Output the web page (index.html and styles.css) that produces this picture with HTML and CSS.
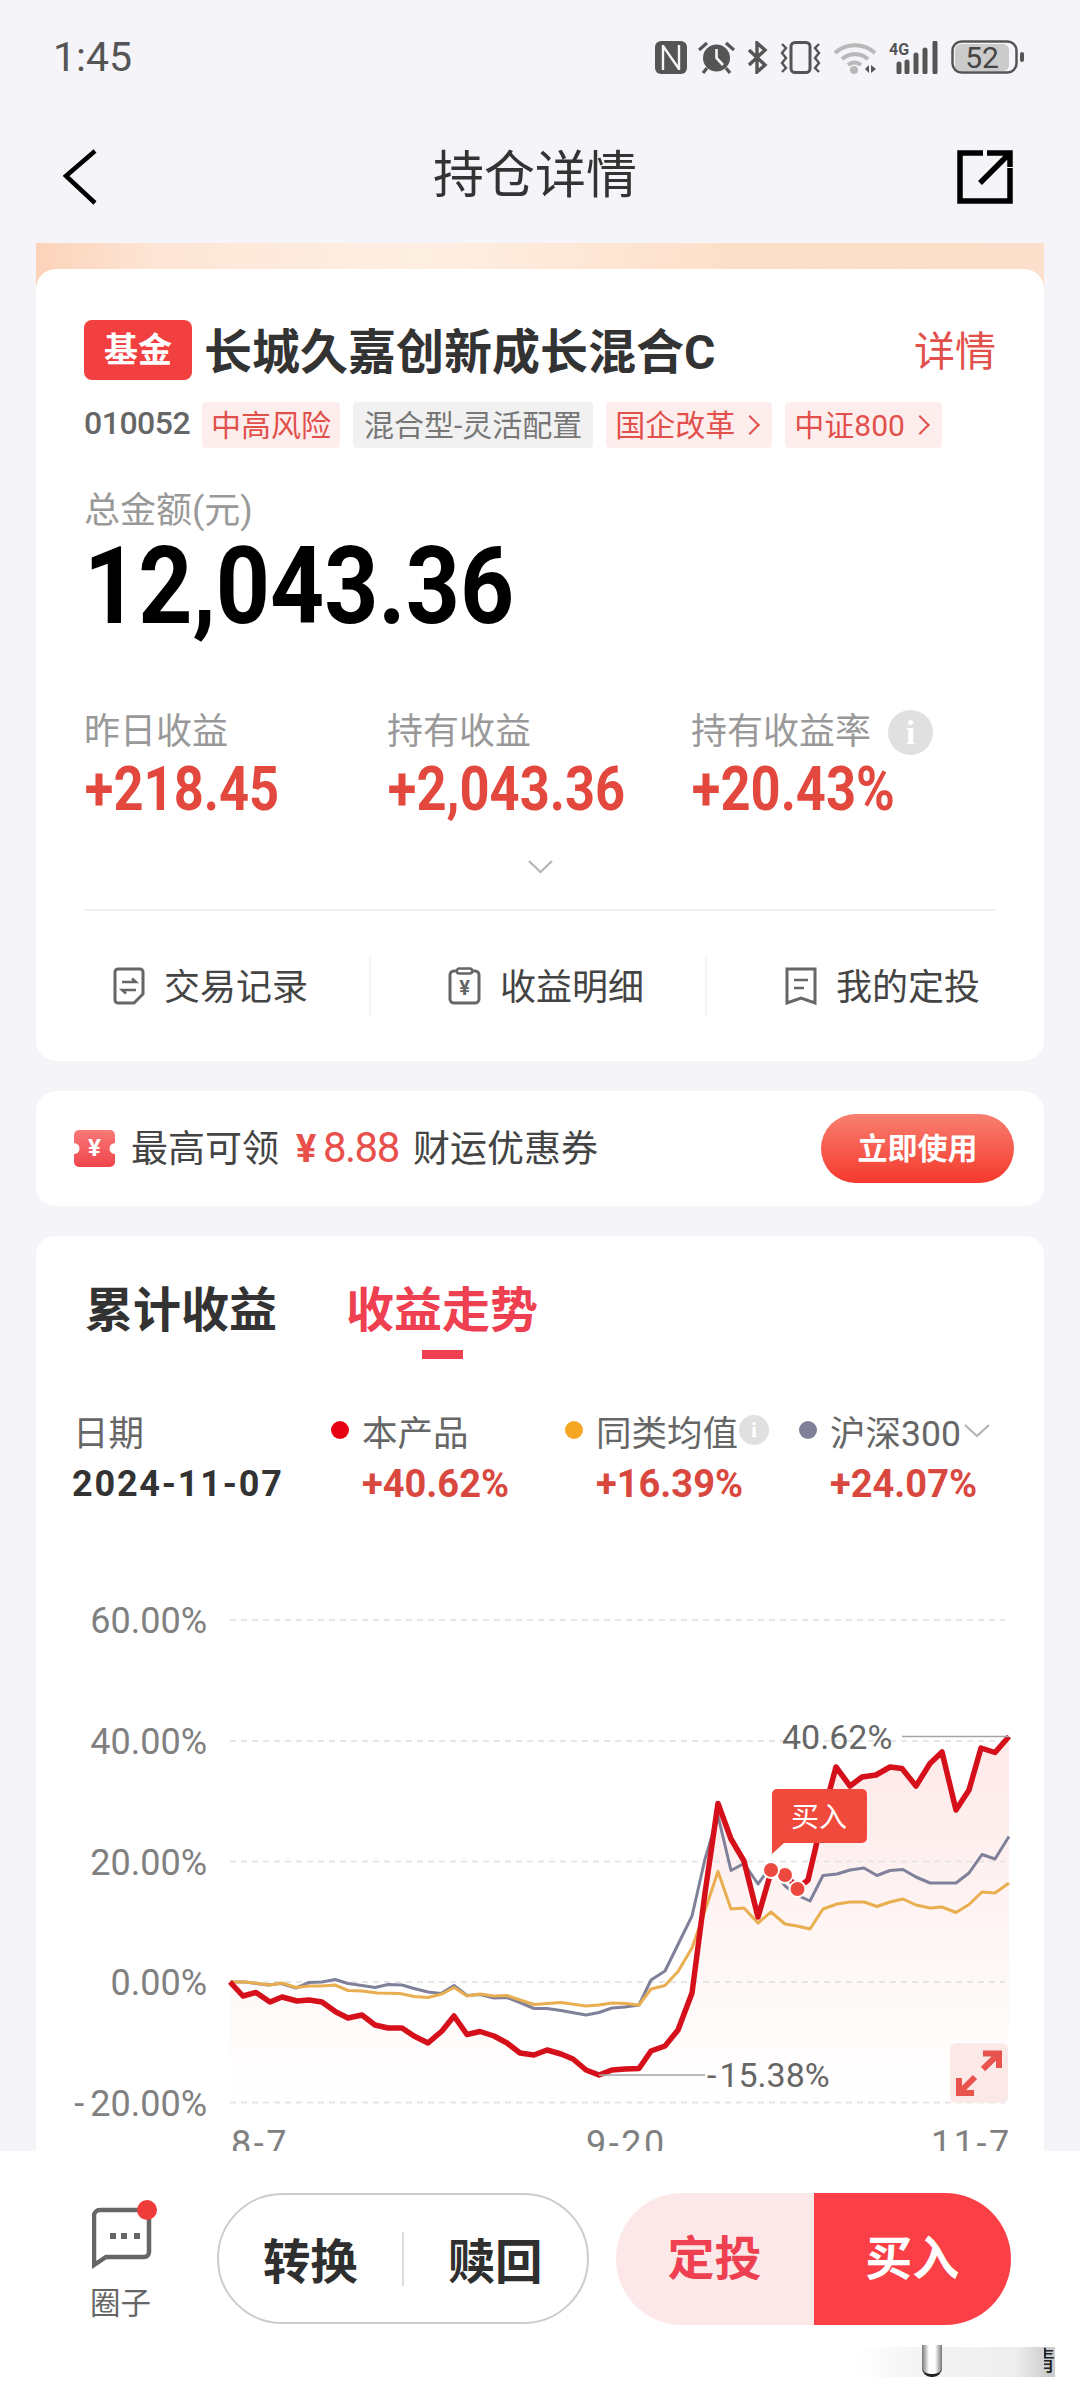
FILE: index.html
```html
<!DOCTYPE html>
<html lang="zh-CN">
<head>
    <meta charset="UTF-8">
    <meta name="viewport" content="width=device-width, initial-scale=1.0">
    <title>持仓详情</title>
    <link rel="stylesheet" href="styles.css">
</head>
<body>
    <div class="page">
        <div class="top">
            <div class="status-bar">
                <span class="clock">1:45</span>
                <div class="status-icons">
                    <svg class="nfc" width="32" height="33" viewBox="0 0 32 33"><rect width="32" height="33" rx="6" fill="#555"/><path d="M8 4V29M24 4V29M8 5L24 28" fill="none" stroke="#f4f4f9" stroke-width="2.4"/></svg>
                    <svg width="37" height="33" viewBox="0 0 37 33"><circle cx="18.500" cy="17" r="13.500" fill="#555"/><path d="M18.500 8V17L25 24" fill="none" stroke="#f4f4f9" stroke-width="2.6"/><path d="M1 9L9 2M36 9L28 2M9 27L5 32M28 27L32 32" fill="none" stroke="#555" stroke-width="3.200"/></svg>
                    <svg width="22" height="33" viewBox="0 0 22 33"><path d="M3 9L19 24L11 31V2L19 9L3 24" fill="none" stroke="#555" stroke-width="3.4"/></svg>
                    <svg width="43" height="33" viewBox="0 0 43 33"><rect x="12" y="1.500" width="19" height="30" rx="4" fill="none" stroke="#555" stroke-width="3"/><path d="M3 3L7 7L3 12L7 17L3 22L7 27L3 31M40 3L36 7L40 12L36 17L40 22L36 27L40 31" fill="none" stroke="#555" stroke-width="2.4"/></svg>
                    <svg width="45" height="33" viewBox="0 0 45 33"><path d="M2 12A30 30 0 0 1 42 12M9 18A20 20 0 0 1 35 18M15 24A10 10 0 0 1 28 24" fill="none" stroke="#b8b8b8" stroke-width="4"/><circle cx="21" cy="29" r="4" fill="#b8b8b8"/><path d="M32 28L36 24V32ZM38 24L43 28L38 32Z" fill="#555"/></svg>
                    <svg width="51" height="33" viewBox="0 0 51 33"><text class="sig-label" x="0" y="14">4G</text><path d="M10 23V31M18 21V31M27 14V31M36 9V31M46 2V31" fill="none" stroke="#555" stroke-width="5" stroke-linecap="round"/></svg>
                    <svg width="73" height="34" viewBox="0 0 73 34"><rect x="4" y="4" width="54" height="27" rx="6" fill="#cbcbcb"/><rect x="1.500" y="1.500" width="64" height="31" rx="9" fill="none" stroke="#555" stroke-width="2.500"/><rect x="69" y="12" width="4" height="10" rx="2" fill="#555"/><text class="batt-label" x="31" y="28">52</text></svg>
                </div>
            </div>
            <div class="nav-bar">
                <svg width="36" height="56" viewBox="0 0 36 56"><path d="M32 2L3 27L32 54" fill="none" stroke="#000" stroke-width="4.500"/></svg>
                <h1 class="nav-title">持仓详情</h1>
                <svg width="56" height="54" viewBox="0 0 56 54"><path d="M26 3H3V51H53V18M30 3H53V17M53 3L23 33" fill="none" stroke="#000" stroke-width="5.500"/></svg>
            </div>
        </div>

        <div class="content">
            <div class="hero">
                <section class="card fund-card">
                    <div class="fund-head">
                        <span class="badge">基金</span>
                        <span class="fund-name">长城久嘉创新成长混合C</span>
                        <span class="detail-link">详情</span>
                    </div>
                    <div class="tag-row">
                        <span class="fund-code">010052</span>
                        <span class="tag">中高风险</span>
                        <span class="tag tag-gray">混合型-灵活配置</span>
                        <span class="tag">国企改革<i class="tag-arrow"></i></span>
                        <span class="tag">中证800<i class="tag-arrow"></i></span>
                    </div>
                    <div class="amount-label">总金额(元)</div>
                    <div class="amount">12,043.36</div>
                    <div class="stats">
                        <div>
                            <div class="stat-label">昨日收益</div>
                            <div class="stat-value">+218.45</div>
                        </div>
                        <div>
                            <div class="stat-label">持有收益</div>
                            <div class="stat-value">+2,043.36</div>
                        </div>
                        <div>
                            <div class="stat-label">持有收益率<span class="info info-big">i</span></div>
                            <div class="stat-value">+20.43%</div>
                        </div>
                    </div>
                    <div class="more">
                        <svg width="27" height="15" viewBox="0 0 27 15"><path d="M2 2L13.500 13L25 2" fill="none" stroke="#b5b5b5" stroke-width="2.200"/></svg>
                    </div>
                    <div class="actions">
                        <div class="action action-first">
                            <svg width="32" height="38" viewBox="0 0 32 38"><path d="M5 2H27A3 3 0 0 1 30 5V27L21 36H5A3 3 0 0 1 2 33V5A3 3 0 0 1 5 2Z" fill="none" stroke="#666" stroke-width="3"/><path d="M9 15H23L19 11.500M23 23H9L13 26.500" fill="none" stroke="#666" stroke-width="2.400"/></svg>
                            <span>交易记录</span>
                        </div>
                        <div class="action action-mid">
                            <svg width="33" height="38" viewBox="0 0 33 38"><rect x="2" y="4" width="29" height="32" rx="4" fill="none" stroke="#666" stroke-width="3"/><rect x="9" y="1.500" width="15" height="5" rx="2" fill="#fff" stroke="#666" stroke-width="2.400"/><text class="action-yen" x="16.500" y="28">¥</text></svg>
                            <span>收益明细</span>
                        </div>
                        <div class="action action-last">
                            <svg width="32" height="38" viewBox="0 0 32 38"><path d="M2 2H30V36L16 31L2 36Z" fill="none" stroke="#666" stroke-width="3"/><path d="M9 13H23M9 21H19" fill="none" stroke="#666" stroke-width="2.600"/></svg>
                            <span>我的定投</span>
                        </div>
                    </div>
                </section>
            </div>

            <section class="card coupon-card">
                <svg width="41" height="37" viewBox="0 0 41 37">
                    <defs><linearGradient id="couponFill" x1="0" y1="0" x2="0" y2="1"><stop offset="0" stop-color="#f97a78"/><stop offset="1" stop-color="#f0444c"/></linearGradient></defs>
                    <path d="M5 0H36A5 5 0 0 1 41 5V13A5.500 5.500 0 0 0 41 24V32A5 5 0 0 1 36 37H5A5 5 0 0 1 0 32V24A5.500 5.500 0 0 0 0 13V5A5 5 0 0 1 5 0Z" fill="url(#couponFill)"/>
                    <text class="coupon-yen" x="20.500" y="26">¥</text>
                </svg>
                <span class="coupon-text">最高可领</span>
                <span class="coupon-value"><b class="coupon-mark">¥</b>8.88</span>
                <span class="coupon-text">财运优惠券</span>
                <span class="coupon-btn">立即使用</span>
            </section>

            <section class="card trend-card">
                <div class="tabs">
                    <div class="tab">累计收益</div>
                    <div class="tab tab-active">收益走势<i class="tab-line"></i></div>
                </div>
                <div class="legend">
                    <div>
                        <div class="legend-label">日期</div>
                        <div class="legend-date">2024-11-07</div>
                    </div>
                    <div>
                        <div class="legend-label"><i class="dot dot-red"></i>本产品</div>
                        <div class="legend-value">+40.62%</div>
                    </div>
                    <div>
                        <div class="legend-label"><i class="dot dot-orange"></i>同类均值<span class="info info-small">i</span></div>
                        <div class="legend-value">+16.39%</div>
                    </div>
                    <div>
                        <div class="legend-label"><i class="dot dot-slate"></i>沪深300<svg class="legend-chev" width="28" height="15" viewBox="0 0 28 15"><path d="M2 2L14 13L26 2" fill="none" stroke="#b5b5b5" stroke-width="2.200"/></svg></div>
                        <div class="legend-value">+24.07%</div>
                    </div>
                </div>

                <svg class="chart" width="1008" height="600" viewBox="36 1590 1008 600">
                    <defs>
                        <linearGradient id="areaFill" gradientUnits="userSpaceOnUse" x1="0" y1="1736" x2="0" y2="2102">
                            <stop offset="0" stop-color="#f2574c" stop-opacity="0.13"/>
                            <stop offset="0.6" stop-color="#f2574c" stop-opacity="0.05"/>
                            <stop offset="1" stop-color="#f2574c" stop-opacity="0"/>
                        </linearGradient>
                    </defs>

                    <polygon fill="url(#areaFill)" points="230,1982 243,1996 256,1992.500 270,2002 282,1997 297,2001 309,2000 322,2002 336,2012 348,2018 362,2015 375,2025 388,2028 402,2028 414,2036 428,2043 442,2031 454,2016 467,2034.500 480,2031.500 494,2036 507,2043 520,2053 534,2055 547,2050 561,2054 573,2059 586,2070 599,2075 612,2070 625,2069 639,2068.500 651,2051 665,2046 678,2030 692,1993 705,1893 718,1803.500 731,1839 744,1861 758,1917 771,1875 785,1872 797,1889 808,1880 816,1846 823,1815 836,1767 850,1786 862,1777 876,1775 890,1767 902,1768.500 916,1786 930,1763.500 942,1752 956,1810 969,1790 981,1748 995,1752.500 1009,1736.500 1009,2102 230,2102"/>

                    <path class="grid" d="M230 1620H1005M230 1741H1005M230 1861.500H1005M230 1982H1005M230 2102.500H1005"/>

                    <text class="axis" x="207" y="1633">60.00%</text>
                    <text class="axis" x="207" y="1754">40.00%</text>
                    <text class="axis" x="207" y="1874.500">20.00%</text>
                    <text class="axis" x="207" y="1995">0.00%</text>
                    <text class="axis" x="207" y="2115.500"><tspan class="wide-dash">-</tspan>20.00%</text>

                    <text class="axis-x" x="231" y="2156">8-7</text>
                    <text class="axis-x" x="586" y="2156">9-20</text>
                    <text class="axis-x" x="931" y="2156">11-7</text>

                    <polyline class="line line-slate" points="230,1982 245,1982 268,1985 281,1983.500 296,1988 309,1982.500 322,1982 335,1979.500 348,1983.500 362,1985.500 375,1987.500 388,1984.500 402,1985 414,1988.500 428,1992 441,1993.500 454,1985.500 467,1995.500 480,1994.500 494,1998 507,1997.500 520,2002.500 534,2008.500 547,2008.500 561,2010.500 572,2012.500 586,2015 599,2012.500 612,2008 625,2007 639,2005 651,1980 665,1971 678,1944.500 692,1916 705,1859 718,1816 731,1870.500 744,1863.500 758,1884 771,1866 785,1886 797,1895 810,1901 823,1875.500 837,1874 850,1870 864,1868 877,1875.500 890,1870.500 903,1869.500 916,1877 930,1883 942,1883 956,1883 969,1873 982,1854.500 995,1859 1009,1836.500"/>
                    <polyline class="line line-orange" points="230,1982 245,1982 258,1983.500 270,1985 282,1983 296,1987.500 309,1986 322,1986 335,1985 348,1990.500 362,1991 377,1993 400,1993.500 414,1996.500 428,1997.500 442,1994 454,1987.500 467,1996 480,1994 494,1996 507,1995.500 520,2000 534,2004.500 561,2002.500 586,2006 599,2005 612,2003 626,2003.500 639,2005 651,1989 665,1985.500 678,1971.500 692,1948 705,1910.500 718,1871.500 731,1909 744,1908 758,1923 771,1912 785,1924 797,1926 810,1929 823,1909 837,1904 850,1902 864,1902 877,1906.500 890,1902 903,1899 916,1905 930,1908 942,1907 956,1912.500 969,1904.500 982,1892 995,1893 1009,1883"/>
                    <polyline class="line line-red" points="230,1982 243,1996 256,1992.500 270,2002 282,1997 297,2001 309,2000 322,2002 336,2012 348,2018 362,2015 375,2025 388,2028 402,2028 414,2036 428,2043 442,2031 454,2016 467,2034.500 480,2031.500 494,2036 507,2043 520,2053 534,2055 547,2050 561,2054 573,2059 586,2070 599,2075 612,2070 625,2069 639,2068.500 651,2051 665,2046 678,2030 692,1993 705,1893 718,1803.500 731,1839 744,1861 758,1917 771,1872 785,1872 797,1889 808,1880 816,1846 823,1815 836,1767 850,1786 862,1777 876,1775 890,1767 902,1768.500 916,1786 930,1763.500 942,1752 956,1810 969,1790 981,1748 995,1752.500 1009,1736.500"/>

                    <path class="leader" d="M902 1736.500H1009M599 2075H705"/>
                    <text class="callout" x="782" y="1749">40.62%</text>
                    <text class="callout" x="707" y="2087"><tspan class="narrow-dash">-</tspan>15.38%</text>

                    <circle class="buy-dot" cx="785" cy="1875" r="8"/>
                    <circle class="buy-dot" cx="771" cy="1870" r="8"/>
                    <circle class="buy-dot" cx="797.500" cy="1889" r="8"/>

                    <path class="buy-tip" d="M777 1789H862A5 5 0 0 1 867 1794V1838A5 5 0 0 1 862 1843H784L772 1854V1794A5 5 0 0 1 777 1789Z"/>
                    <text class="buy-label" x="819" y="1827">买入</text>

                    <rect class="expand-bg" x="950" y="2043" width="58" height="60" rx="6"/>
                    <path class="expand-arrow" d="M983 2053.500H999V2068M998 2054.500L983 2069M959 2078V2093H974M960 2092L975 2077"/>
                </svg>
            </section>
        </div>

        <footer class="bottom-bar">
            <div class="circle-link">
                <svg width="68" height="70" viewBox="0 0 68 70">
                    <path d="M46 11H8A6 6 0 0 0 2 17V66L14 58H52A5 5 0 0 0 57 53V20" fill="none" stroke="#666" stroke-width="4.500"/>
                    <path d="M18 40h6v-6h-6zM29 40h6v-6h-6zM42 40h6v-6h-6z" fill="#666"/>
                    <circle cx="55" cy="11" r="10" fill="#f03b3b"/>
                </svg>
                <span class="circle-label">圈子</span>
            </div>
            <div class="pill-outline">
                <span class="pill-item">转换</span>
                <i class="pill-sep"></i>
                <span class="pill-item">赎回</span>
            </div>
            <div class="pill-buy">
                <span class="pill-plan">定投</span>
                <span class="pill-now">买入</span>
            </div>
            <div class="watermark">
                <i class="watermark-bar"></i>
                <span class="watermark-glyph">情</span>
            </div>
        </footer>
    </div>
</body>
</html>
```

FILE: styles.css
```css
* {
    box-sizing: border-box;
}

body {
    margin: 0;
    background-color: #f4f4f9;
    font-family: Roboto, "Noto Sans CJK SC", sans-serif;
    color: #333;
}

i {
    font-style: normal;
}

.page {
    width: 1080px;
    height: 2400px;
    display: flex;
    flex-direction: column;
    overflow: hidden;
}

/* status + nav */
.top {
    height: 243px;
    flex: none;
}

.status-bar {
    height: 114px;
    padding: 0 56px 0 53px;
    display: flex;
    align-items: center;
    justify-content: space-between;
}

.clock {
    font-size: 41px;
    color: #555;
}

.status-icons {
    display: flex;
    align-items: center;
    gap: 11px;
}

.sig-label {
    font-size: 16px;
    font-weight: 700;
    fill: #555;
}

.batt-label {
    font-size: 30px;
    fill: #444;
    text-anchor: middle;
}

.nav-bar {
    height: 126px;
    padding: 0 67px 0 63px;
    display: flex;
    align-items: center;
    justify-content: space-between;
}

.nav-title {
    margin: 0;
    font-size: 51px;
    font-weight: 400;
    color: #333;
    position: relative;
    left: 7px;
    top: -6px;
}

/* cards */
.content {
    flex: 1;
    min-height: 0;
    overflow: hidden;
    padding: 0 36px;
}

.card {
    background-color: #fff;
    border-radius: 20px;
}

.hero {
    padding-top: 26px;
    background: linear-gradient(90deg, #fcd3b9 0%, #fde5d5 12%, #feefe3 38%, #fddfc8 70%, #fde0cb 100%) top / 100% 50px no-repeat;
}

.fund-card {
    height: 792px;
    padding: 51px 48px 0;
}

.fund-head {
    height: 60px;
    display: flex;
    align-items: center;
}

.badge {
    width: 108px;
    height: 60px;
    border-radius: 8px;
    background-color: #f23f40;
    color: #fff;
    font-size: 34px;
    font-weight: 700;
    line-height: 60px;
    text-align: center;
}

.fund-name {
    margin-left: 12px;
    padding-bottom: 5px;
    font-size: 48px;
    font-weight: 700;
    color: #333;
}

.detail-link {
    margin-left: auto;
    padding-bottom: 5px;
    font-size: 41px;
    color: #e2504c;
}

.tag-row {
    margin-top: 22px;
    display: flex;
    align-items: center;
    gap: 13px;
}

.fund-code {
    width: 105px;
    padding-bottom: 4px;
    font-size: 32px;
    font-weight: 500;
    color: #666;
    letter-spacing: -0.500px;
}

.tag {
    height: 46px;
    padding: 0 9px 4px 9px;
    display: flex;
    align-items: center;
    border-radius: 4px;
    background-color: #fdeeed;
    color: #e2504c;
    font-size: 30px;
}

.tag-gray {
    padding: 0 11px 4px 11px;
    background-color: #f1f1f1;
    color: #777;
}

.tag-arrow {
    width: 14px;
    height: 14px;
    margin: 4px 6px 0 8px;
    border-top: 2px solid #e2504c;
    border-right: 2px solid #e2504c;
    transform: rotate(45deg);
}

.amount-label {
    margin-top: 42px;
    height: 42px;
    font-size: 36px;
    line-height: 42px;
    color: #999;
}

/* numbers in the screenshot are a condensed face, Roboto squeezed to fit */
.amount {
    margin-top: 4px;
    height: 100px;
    font-size: 108px;
    font-weight: 700;
    line-height: 100px;
    color: #000;
    transform: scaleX(0.875);
    transform-origin: left;
}

.stats {
    margin-top: 75px;
    display: grid;
    grid-template-columns: 303px 304px 1fr;
}

.stat-label {
    height: 42px;
    display: flex;
    align-items: center;
    font-size: 36px;
    line-height: 42px;
    color: #999;
}

.stat-value {
    margin-top: 5px;
    height: 60px;
    padding-left: 1px;
    font-size: 61px;
    font-weight: 700;
    line-height: 62px;
    color: #e2483d;
    white-space: nowrap;
    transform: scaleX(0.86);
    transform-origin: left;
}

.info {
    display: inline-block;
    border-radius: 50%;
    background-color: #e0e0e0;
    color: #fff;
    font-family: "Liberation Serif", serif;
    font-weight: 700;
    text-align: center;
}

.info-big {
    width: 45px;
    height: 45px;
    margin-left: 17px;
    font-size: 34px;
    line-height: 45px;
}

.info-small {
    width: 30px;
    height: 30px;
    margin-left: 1px;
    font-size: 22px;
    line-height: 30px;
}

.more {
    margin-top: 41px;
    height: 15px;
    display: flex;
    justify-content: center;
}

.more svg {
    display: block;
}

.actions {
    margin-top: 35px;
    padding-top: 46px;
    border-top: 2px solid #f0f0f0;
    display: grid;
    grid-template-columns: 287px 336px 1fr;
}

.action {
    height: 58px;
    display: flex;
    align-items: center;
    gap: 19px;
    font-size: 36px;
    color: #444;
}

.action span {
    padding-bottom: 5px;
}

.action-first {
    padding-left: 29px;
    border-right: 2px solid #f3f3f3;
}

.action-mid {
    padding-left: 77px;
    border-right: 2px solid #f3f3f3;
}

.action-last {
    padding-left: 78px;
}

.action-yen {
    font-size: 20px;
    font-weight: 700;
    fill: #666;
    text-anchor: middle;
}

.coupon-card {
    margin-top: 30px;
    height: 115px;
    padding: 0 30px 0 38px;
    display: flex;
    align-items: center;
}

.coupon-yen {
    font-size: 24px;
    font-weight: 700;
    fill: #fff;
    text-anchor: middle;
}

.coupon-text {
    margin-left: 16px;
    padding-bottom: 5px;
    font-size: 37px;
    color: #444;
}

.coupon-value {
    width: 105px;
    margin: 0 -4px 0 17px;
    padding-bottom: 3px;
    font-size: 42px;
    letter-spacing: -1.500px;
    color: #e8504c;
    white-space: nowrap;
}

.coupon-mark {
    margin-right: 8px;
    font-size: 38px;
    font-weight: 700;
}

.coupon-btn {
    margin-left: auto;
    width: 193px;
    height: 69px;
    border-radius: 35px;
    background: linear-gradient(180deg, #f97f70 0%, #f4392c 100%);
    color: #fff;
    font-size: 30px;
    font-weight: 700;
    line-height: 69px;
    text-align: center;
}

/* trend chart */
.trend-card {
    margin-top: 30px;
    height: 1000px;
    padding-top: 50px;
}

.tabs {
    padding-left: 49px;
    display: flex;
    gap: 69px;
}

.tab {
    height: 50px;
    font-size: 48px;
    font-weight: 700;
    line-height: 50px;
    color: #333;
}

.tab-active {
    height: auto;
    display: flex;
    flex-direction: column;
    align-items: center;
    color: #ee4050;
}

.tab-line {
    width: 41px;
    height: 9px;
    margin-top: 14px;
    background-color: #ee4050;
}

.legend {
    margin-top: 52px;
    padding-left: 37px;
    display: grid;
    grid-template-columns: 258px 234px 234px 1fr;
}

.legend-label {
    height: 42px;
    padding-bottom: 4px;
    display: flex;
    align-items: center;
    font-size: 35.500px;
    color: #666;
}

.dot {
    width: 18px;
    height: 18px;
    margin-right: 13px;
    border-radius: 50%;
}

.dot-red {
    background-color: #e60012;
}

.dot-orange {
    background-color: #f5a623;
}

.dot-slate {
    background-color: #7e8199;
}

.legend-chev {
    margin-left: 2px;
}

.legend-date {
    margin-top: 9px;
    height: 44px;
    font-size: 36px;
    font-weight: 700;
    line-height: 44px;
    color: #333;
    letter-spacing: 1.800px;
    margin-left: -1px;
}

.legend-value {
    margin-top: 9px;
    padding-left: 31px;
    height: 44px;
    font-size: 38px;
    font-weight: 700;
    line-height: 44px;
    color: #d9483f;
}

.chart {
    display: block;
    margin-top: 84px;
}

.grid {
    fill: none;
    stroke: #e6e6e6;
    stroke-width: 2;
    stroke-dasharray: 6 5;
}

.axis {
    font-size: 36px;
    fill: #808080;
    text-anchor: end;
}

.axis-x {
    font-size: 36px;
    fill: #808080;
    letter-spacing: 2.500px;
}

.wide-dash {
    letter-spacing: 6px;
}

.narrow-dash {
    letter-spacing: 3px;
}

.line {
    fill: none;
    stroke-linejoin: round;
}

.line-red {
    stroke: #d5101a;
    stroke-width: 5.500;
}

.line-slate {
    stroke: #7e8199;
    stroke-width: 3;
}

.line-orange {
    stroke: #e9ae4f;
    stroke-width: 3;
}

.leader {
    fill: none;
    stroke: #a5a5a5;
    stroke-width: 1.500;
}

.callout {
    font-size: 34px;
    fill: #666;
}

.buy-dot {
    fill: #ec4a3f;
    stroke: #fff;
    stroke-width: 2;
}

.buy-tip {
    fill: #f04a3c;
}

.buy-label {
    font-size: 28px;
    fill: #fff;
    text-anchor: middle;
}

.expand-bg {
    fill: #fbe9e8;
}

.expand-arrow {
    fill: none;
    stroke: #e8534d;
    stroke-width: 6;
}

/* bottom actions */
.bottom-bar {
    position: relative;
    height: 249px;
    flex: none;
    padding: 42px 69px 0 92px;
    display: flex;
    align-items: flex-start;
    background-color: #fff;
}

.circle-link {
    width: 68px;
    margin-top: 6px;
    display: flex;
    flex-direction: column;
    align-items: center;
}

.circle-link svg {
    display: block;
}

.circle-label {
    margin-top: 17px;
    margin-left: -11px;
    font-size: 30.500px;
    line-height: 36px;
    color: #666;
    white-space: nowrap;
}

.pill-outline {
    width: 372px;
    height: 131px;
    margin-left: 57px;
    border: 2px solid #ccc;
    border-radius: 66px;
    display: flex;
    align-items: center;
}

.pill-item {
    width: 50%;
    font-size: 47.500px;
    font-weight: 700;
    color: #2f2f2f;
    text-align: center;
}

.pill-sep {
    width: 2px;
    height: 54px;
    flex: none;
    background-color: #ddd;
}

.pill-buy {
    width: 396px;
    height: 132px;
    margin-left: 27px;
    border-radius: 66px;
    overflow: hidden;
    display: flex;
    font-size: 47px;
    font-weight: 700;
    line-height: 132px;
    text-align: center;
}

.pill-plan {
    width: 198px;
    background-color: #fce8e8;
    color: #ee4050;
}

.pill-now {
    flex: 1;
    background-color: #fa3f46;
    color: #fff;
}

/* blurred watermark in the corner */
.watermark {
    position: absolute;
    left: 857px;
    top: 196px;
    width: 198px;
    height: 30px;
    display: flex;
    justify-content: flex-end;
    background: linear-gradient(90deg, rgba(235, 235, 235, 0) 0%, #f4f4f4 30%, #eeeeee 80%, #cccccc 97%);
}

.watermark-bar {
    position: absolute;
    left: 65px;
    top: -2px;
    width: 20px;
    height: 32px;
    border-bottom: 3px solid #222;
    border-radius: 0 0 9px 9px;
    background: linear-gradient(90deg, #777, #fff 35%, #fff 65%, #777);
}

.watermark-glyph {
    width: 11px;
    overflow: hidden;
    direction: rtl;
    font-size: 27px;
    line-height: 30px;
    color: #222;
}
```
